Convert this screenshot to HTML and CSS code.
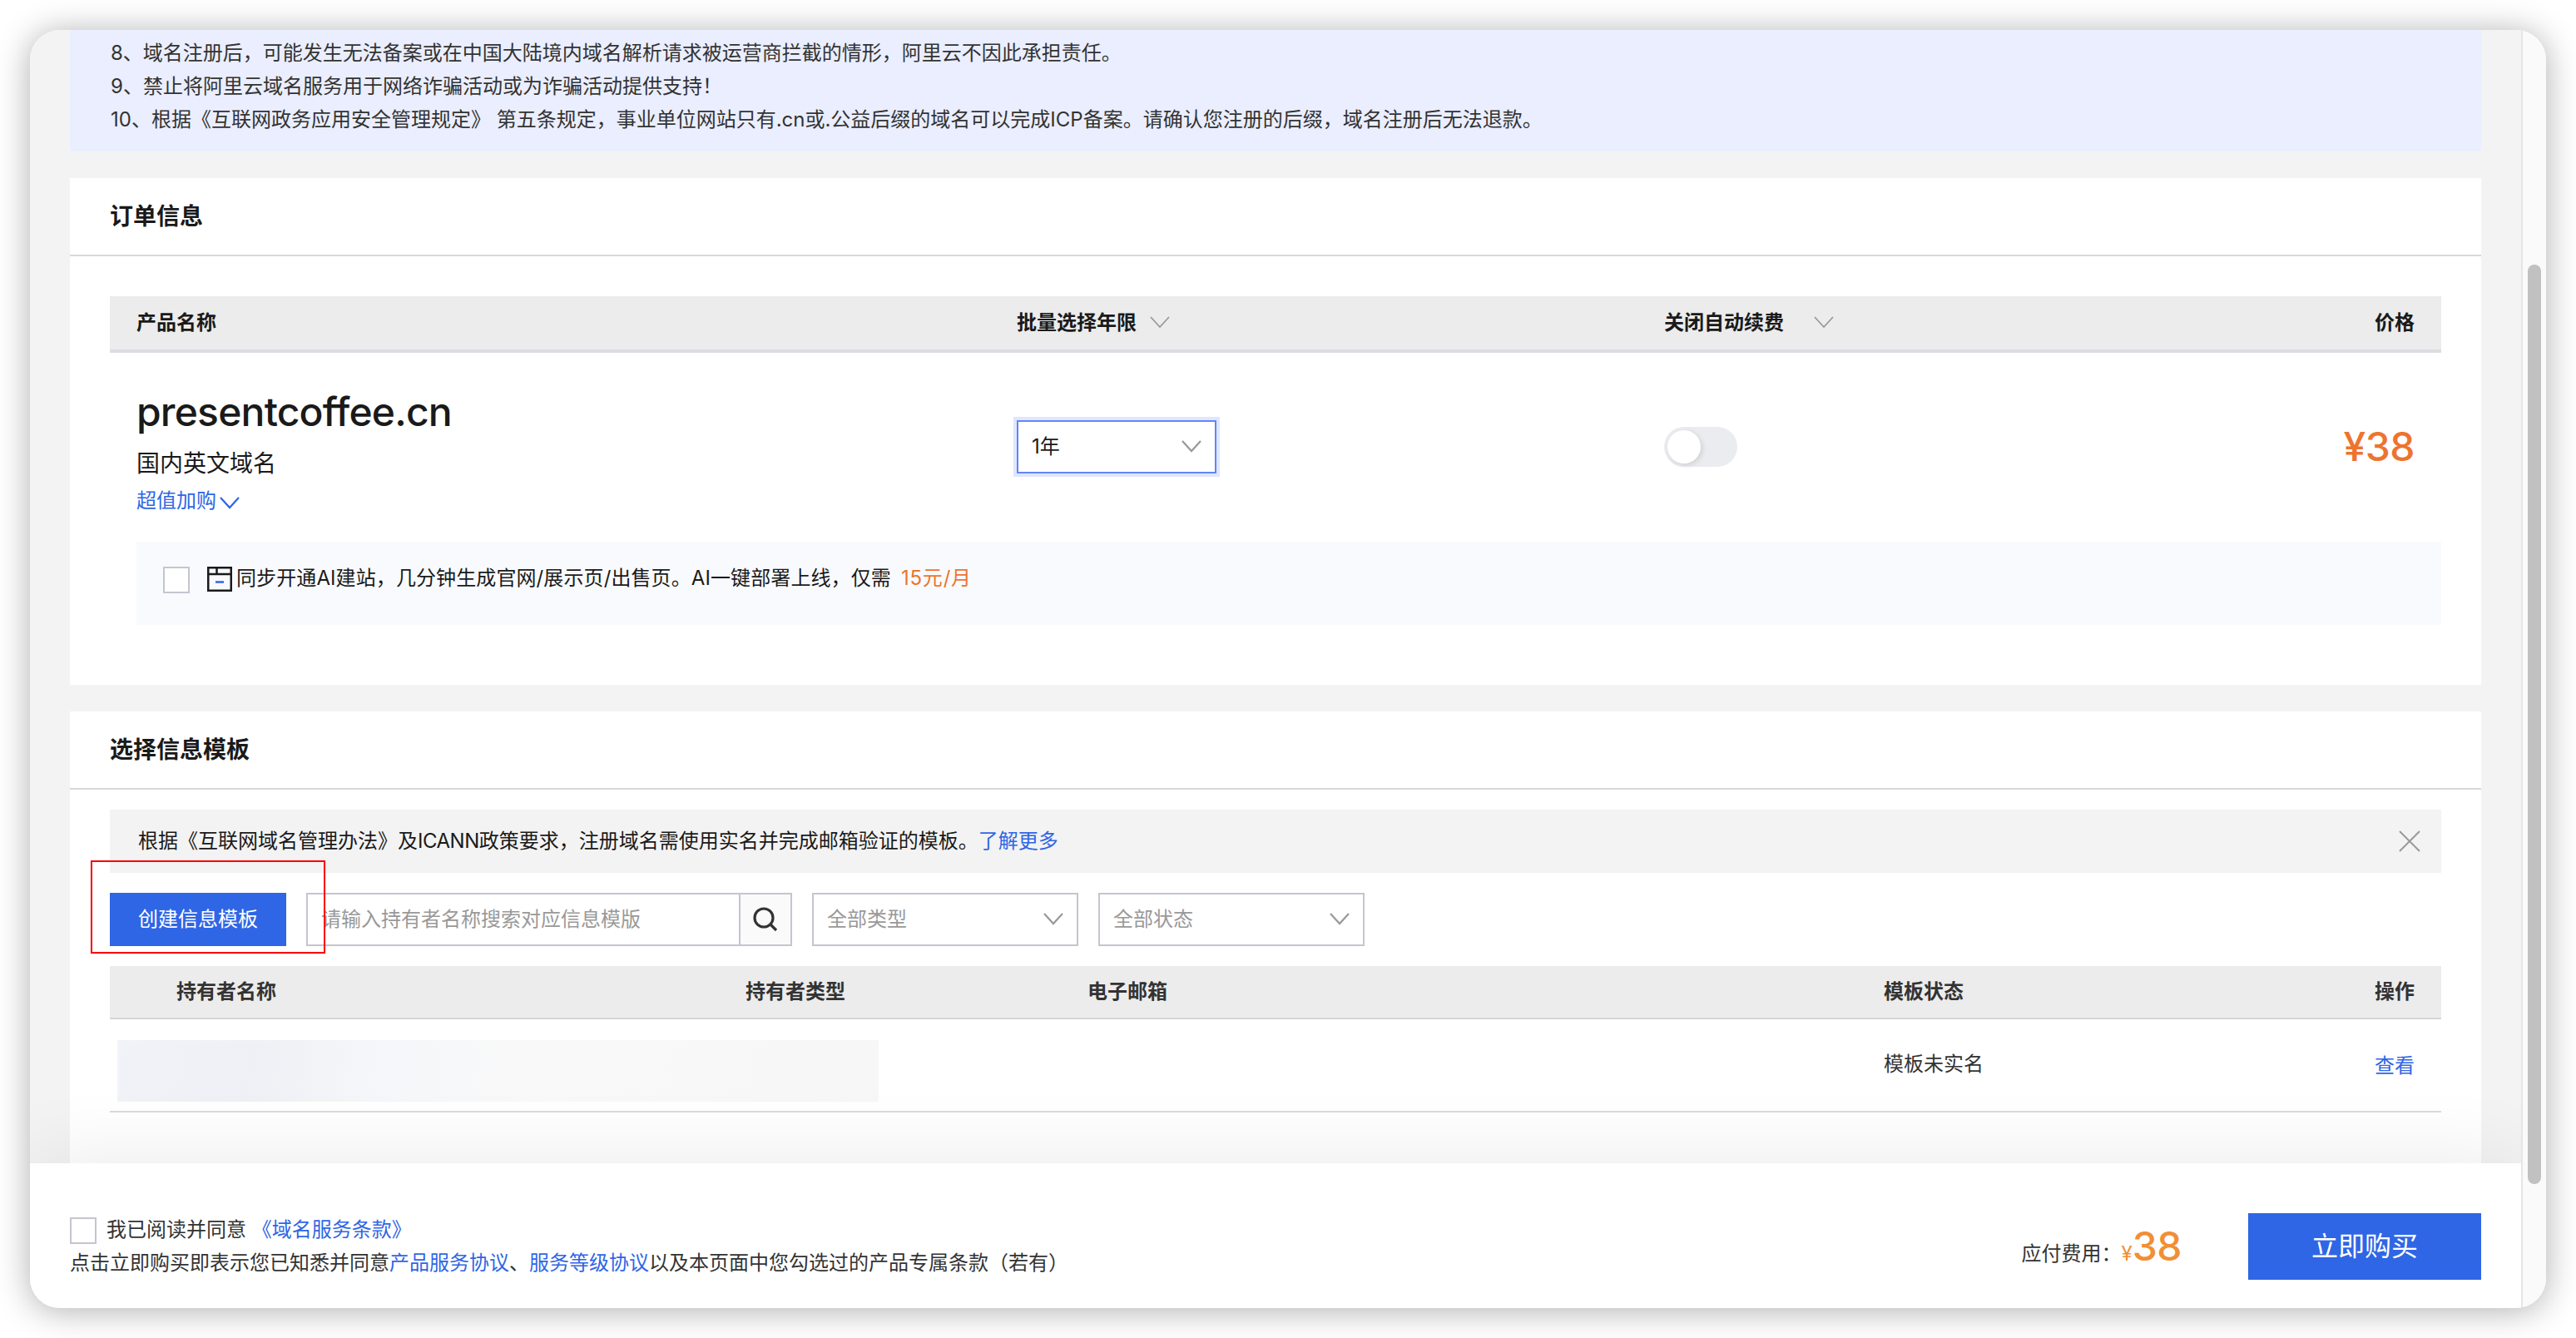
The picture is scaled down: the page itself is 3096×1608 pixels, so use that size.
FILE: index.html
```html
<!DOCTYPE html>
<html lang="zh-CN">
<head>
    <meta charset="UTF-8">
    <meta name="viewport" content="width=device-width, initial-scale=1.0">
    <title>确认订单</title>
    <link rel="stylesheet" href="styles.css">
</head>
<body>
    <div class="window">
        <div class="page">
            <main class="content">
                <div class="notice">
                    <p>8、域名注册后，可能发生无法备案或在中国大陆境内域名解析请求被运营商拦截的情形，阿里云不因此承担责任。</p>
                    <p>9、禁止将阿里云域名服务用于网络诈骗活动或为诈骗活动提供支持！</p>
                    <p>10、根据《互联网政务应用安全管理规定》 第五条规定，事业单位网站只有.cn或.公益后缀的域名可以完成ICP备案。请确认您注册的后缀，域名注册后无法退款。</p>
                </div>

                <section class="card order">
                    <h2>订单信息</h2>
                    <div class="order-head">
                        <span>产品名称</span>
                        <span class="with-arrow">批量选择年限
                            <svg class="chevron thin" viewBox="0 0 24 16"><path d="M1 1l11 12L23 1"/></svg>
                        </span>
                        <span class="with-arrow wide">关闭自动续费
                            <svg class="chevron thin" viewBox="0 0 24 16"><path d="M1 1l11 12L23 1"/></svg>
                        </span>
                        <span>价格</span>
                    </div>
                    <div class="order-row">
                        <div class="product">
                            <div class="domain">presentcoffee.cn</div>
                            <div class="kind">国内英文域名</div>
                            <a class="more">超值加购<svg class="chevron" viewBox="0 0 24 16"><path d="M1 1l11 12L23 1"/></svg></a>
                        </div>
                        <div class="select focused">1年
                            <svg class="chevron" viewBox="0 0 24 16"><path d="M1 1l11 12L23 1"/></svg>
                        </div>
                        <div class="switch"><i></i></div>
                        <div class="price">¥38</div>
                    </div>
                    <div class="upsell">
                        <span class="checkbox"></span>
                        <svg class="site-icon" viewBox="0 0 30 30">
                            <rect x="1.25" y="1.25" width="27.5" height="27.5"/>
                            <path d="M0 9h30M11.5 1v8"/>
                            <path class="dash" d="M10 18.5h10"/>
                        </svg>
                        <span>同步开通AI建站，几分钟生成官网/展示页/出售页。AI一键部署上线，仅需</span>
                        <span class="upsell-price">15元/月</span>
                    </div>
                </section>

                <section class="card template">
                    <h2>选择信息模板</h2>
                    <div class="alert">
                        <span>根据《互联网域名管理办法》及<span class="latin">ICANN</span>政策要求，注册域名需使用实名并完成邮箱验证的模板。<a>了解更多</a></span>
                        <svg class="close" viewBox="0 0 26 26"><path d="M1 1l24 24M25 1L1 25"/></svg>
                    </div>
                    <div class="toolbar">
                        <button class="create-btn">创建信息模板</button>
                        <div class="search">
                            <span class="search-text">请输入持有者名称搜索对应信息模版</span>
                            <span class="search-btn">
                                <svg viewBox="0 0 30 30"><circle cx="13" cy="13" r="11"/><path d="M20.5 20.5l7.5 7.5"/></svg>
                            </span>
                        </div>
                        <div class="select filter">全部类型
                            <svg class="chevron" viewBox="0 0 24 16"><path d="M1 1l11 12L23 1"/></svg>
                        </div>
                        <div class="select filter">全部状态
                            <svg class="chevron" viewBox="0 0 24 16"><path d="M1 1l11 12L23 1"/></svg>
                        </div>
                        <div class="highlight"></div>
                    </div>
                    <div class="tpl-grid tpl-head">
                        <span>持有者名称</span>
                        <span>持有者类型</span>
                        <span>电子邮箱</span>
                        <span>模板状态</span>
                        <span>操作</span>
                    </div>
                    <div class="tpl-grid tpl-row">
                        <div class="mask"></div>
                        <span>模板未实名</span>
                        <a>查看</a>
                    </div>
                </section>
            </main>

            <footer class="footer">
                <div class="terms">
                    <div class="agree"><span class="checkbox"></span><span>我已阅读并同意 <a>《域名服务条款》</a></span></div>
                    <div>点击立即购买即表示您已知悉并同意<a>产品服务协议</a>、<a>服务等级协议</a>以及本页面中您勾选过的产品专属条款（若有）</div>
                </div>
                <div class="total">应付费用：<span class="yen">¥</span><span class="amount">38</span></div>
                <button class="buy-btn">立即购买</button>
            </footer>
        </div>
        <div class="scrollbar"><div class="thumb"></div></div>
    </div>
</body>
</html>
```
FILE: styles.css
```css
:root {
    --primary: #2f66e5;
    --link: #2f66e5;
    --orange: #ee742e;
    --text: #1a1a1a;
    --text-2: #333;
    --gray-bg: #f3f3f3;
    --border: #c5c5d0;
}
* {
    box-sizing: border-box;
}
body {
    margin: 0;
    padding: 36px;
    height: 1608px;
    background: #fff;
    font-family: Inter, 'Noto Sans CJK SC', sans-serif;
    font-size: 24px;
    line-height: 40px;
    color: var(--text);
    text-spacing-trim: space-all;
    overflow: hidden;
}
p, h2 {
    margin: 0;
}
a {
    color: var(--link);
}
button {
    border: none;
    padding: 0;
    font: inherit;
    color: #fff;
    background: var(--primary);
}
.window {
    display: flex;
    height: 1536px;
    border-radius: 36px;
    box-shadow: 0 3px 40px rgba(0, 0, 0, 0.32);
    background: #fff;
    overflow: hidden;
}
.page {
    flex: 1;
    display: flex;
    flex-direction: column;
    overflow: hidden;
    background: var(--gray-bg);
}
.content {
    height: 1362px;
    padding: 0 48px;
    overflow: hidden;
}

/* notice */
.notice {
    height: 146px;
    padding: 8px 48px 0 49px;
    background: #eaeefe;
    border-bottom: 2px solid #e6f0ff;
    border-radius: 0 0 4px 4px;
    color: var(--text-2);
}

/* cards */
.card {
    margin-top: 32px;
    padding: 0 48px;
    background: #fff;
}
.card h2 {
    height: 94px;
    margin: 0 -48px;
    padding-left: 48px;
    border-bottom: 2px solid #d8d8d8;
    font-size: 28px;
    font-weight: 600;
    line-height: 93px;
}
.order {
    height: 609px;
}
.template {
    height: 600px;
}
.chevron {
    width: 24px;
    height: 16px;
    fill: none;
    stroke: #999;
    stroke-width: 2.2;
}
.chevron.thin {
    stroke-width: 1.8;
}

/* order table */
.order-head,
.order-row {
    display: grid;
    grid-template-columns: 1058px 778px 1fr auto;
    padding: 0 32px;
}
.order-head {
    margin-top: 48px;
    height: 68px;
    background: #ececec;
    border-bottom: 4px solid #dcdde3;
    font-weight: 600;
    line-height: 64px;
}
.with-arrow {
    display: flex;
    align-items: center;
    gap: 16px;
}
.with-arrow.wide {
    gap: 36px;
}
.order-row {
    height: 227px;
    align-items: start;
}
.product {
    padding-top: 43px;
}
.domain {
    font-size: 48px;
    font-weight: 500;
    line-height: 56px;
    letter-spacing: -0.8px;
}
.kind {
    margin-top: 14px;
    font-size: 28px;
}
.more {
    display: flex;
    align-items: center;
    gap: 4px;
    margin-top: 7px;
    line-height: 36px;
}
.more .chevron {
    stroke: var(--link);
    margin-top: 6px;
}
.select {
    display: flex;
    align-items: center;
    justify-content: space-between;
    height: 64px;
    padding: 0 16px;
    border: 2px solid var(--border);
    background: #fff;
}
.select.focused {
    width: 240px;
    margin-top: 81px;
    border-color: #6286f5;
    box-shadow: 0 0 0 4px #dfe6fe;
}
.switch {
    width: 88px;
    height: 48px;
    margin-top: 89px;
    padding: 4px;
    border-radius: 24px;
    background: #ebecf0;
}
.switch i {
    display: block;
    width: 40px;
    height: 40px;
    border-radius: 50%;
    background: #fff;
    box-shadow: 2px 2px 6px rgba(0, 0, 0, 0.12);
}
.price {
    margin-top: 85px;
    line-height: 56px;
    font-size: 48px;
    font-weight: 500;
    letter-spacing: -0.5px;
    color: var(--orange);
}
.upsell {
    display: flex;
    height: 100px;
    margin-left: 32px;
    padding: 24px 32px 0;
    background: #f9fafe;
    letter-spacing: 0.1px;
}
.checkbox {
    flex: none;
    width: 32px;
    height: 32px;
    border: 2px solid var(--border);
    background: #fff;
}
.upsell .checkbox {
    margin: 6px 21px 0 0;
}
.site-icon {
    width: 30px;
    height: 30px;
    margin: 6px 5px 0 0;
    fill: none;
    stroke: var(--text);
    stroke-width: 2.5;
}
.site-icon .dash {
    stroke: var(--link);
}
.upsell-price {
    margin-left: 12px;
    letter-spacing: 0.8px;
    color: var(--orange);
}

/* templates */
.alert {
    display: flex;
    align-items: center;
    justify-content: space-between;
    height: 76px;
    margin-top: 24px;
    padding: 0 25px 0 34px;
    background: var(--gray-bg);
}
.latin {
    letter-spacing: -0.5px;
}
.close {
    width: 26px;
    height: 26px;
    stroke: #999;
    stroke-width: 2;
}
.toolbar {
    position: relative;
    display: flex;
    gap: 24px;
    margin: 24px 0;
    height: 64px;
}
.create-btn {
    width: 212px;
}
.search {
    display: flex;
    width: 584px;
    border: 2px solid var(--border);
}
.search-text {
    flex: 1;
    padding-left: 16px;
    line-height: 60px;
    color: #999;
}
.search-btn {
    display: flex;
    align-items: center;
    justify-content: center;
    width: 62px;
    border-left: 2px solid var(--border);
    background: #fafafa;
}
.search-btn svg {
    width: 30px;
    height: 30px;
    fill: none;
    stroke: #333;
    stroke-width: 3.2;
}
.filter {
    width: 320px;
    color: #999;
}
.highlight {
    position: absolute;
    left: -23px;
    top: -39px;
    width: 282px;
    height: 112px;
    border: 2px solid #f80808;
    box-shadow: 0 0 2px rgba(255, 0, 0, 0.2);
}
.tpl-grid {
    display: grid;
    grid-template-columns: 684px 411px 957px 1fr auto;
    padding: 0 32px 0 80px;
    color: var(--text-2);
}
.tpl-head {
    height: 64px;
    line-height: 62px;
    background: #ececec;
    border-bottom: 2px solid #d6d6d6;
    font-weight: 600;
}
.tpl-row {
    height: 112px;
    padding-top: 25px;
    border-bottom: 2px solid #dadbe2;
}
.mask {
    grid-column: span 3;
    width: 915px;
    height: 74px;
    margin-left: -71px;
    background: linear-gradient(100deg, #f2f3f8 0%, #eff0f5 18%, #f6f7fa 35%, #f9f9f9 55%, #f7f7f7 100%);
}
.tpl-row span {
    margin-top: 9px;
}
.tpl-row a {
    margin-top: 11px;
}

/* bottom bar */
.footer {
    position: relative;
    display: flex;
    flex: 1;
    padding: 60px 48px 0;
    background: #fff;
    box-shadow: 0 0 100px rgba(0, 0, 0, 0.09);
    color: var(--text-2);
}
.terms {
    flex: 1;
}
.agree {
    display: flex;
    gap: 12px;
}
.agree .checkbox {
    margin-top: 5px;
}
.total {
    margin-right: 80px;
    line-height: 80px;
}
.yen {
    color: #f08f35;
}
.amount {
    font-size: 48px;
    font-weight: 500;
    letter-spacing: -0.5px;
    color: #f08f35;
}
.buy-btn {
    width: 280px;
    height: 80px;
    font-size: 32px;
}

.scrollbar {
    width: 30px;
    border-left: 2px solid #e6e6e6;
    background: #fafafa;
}
.thumb {
    width: 16px;
    height: 1105px;
    margin: 282px 0 0 6px;
    border-radius: 8px;
    background: #c1c1c1;
}
```
